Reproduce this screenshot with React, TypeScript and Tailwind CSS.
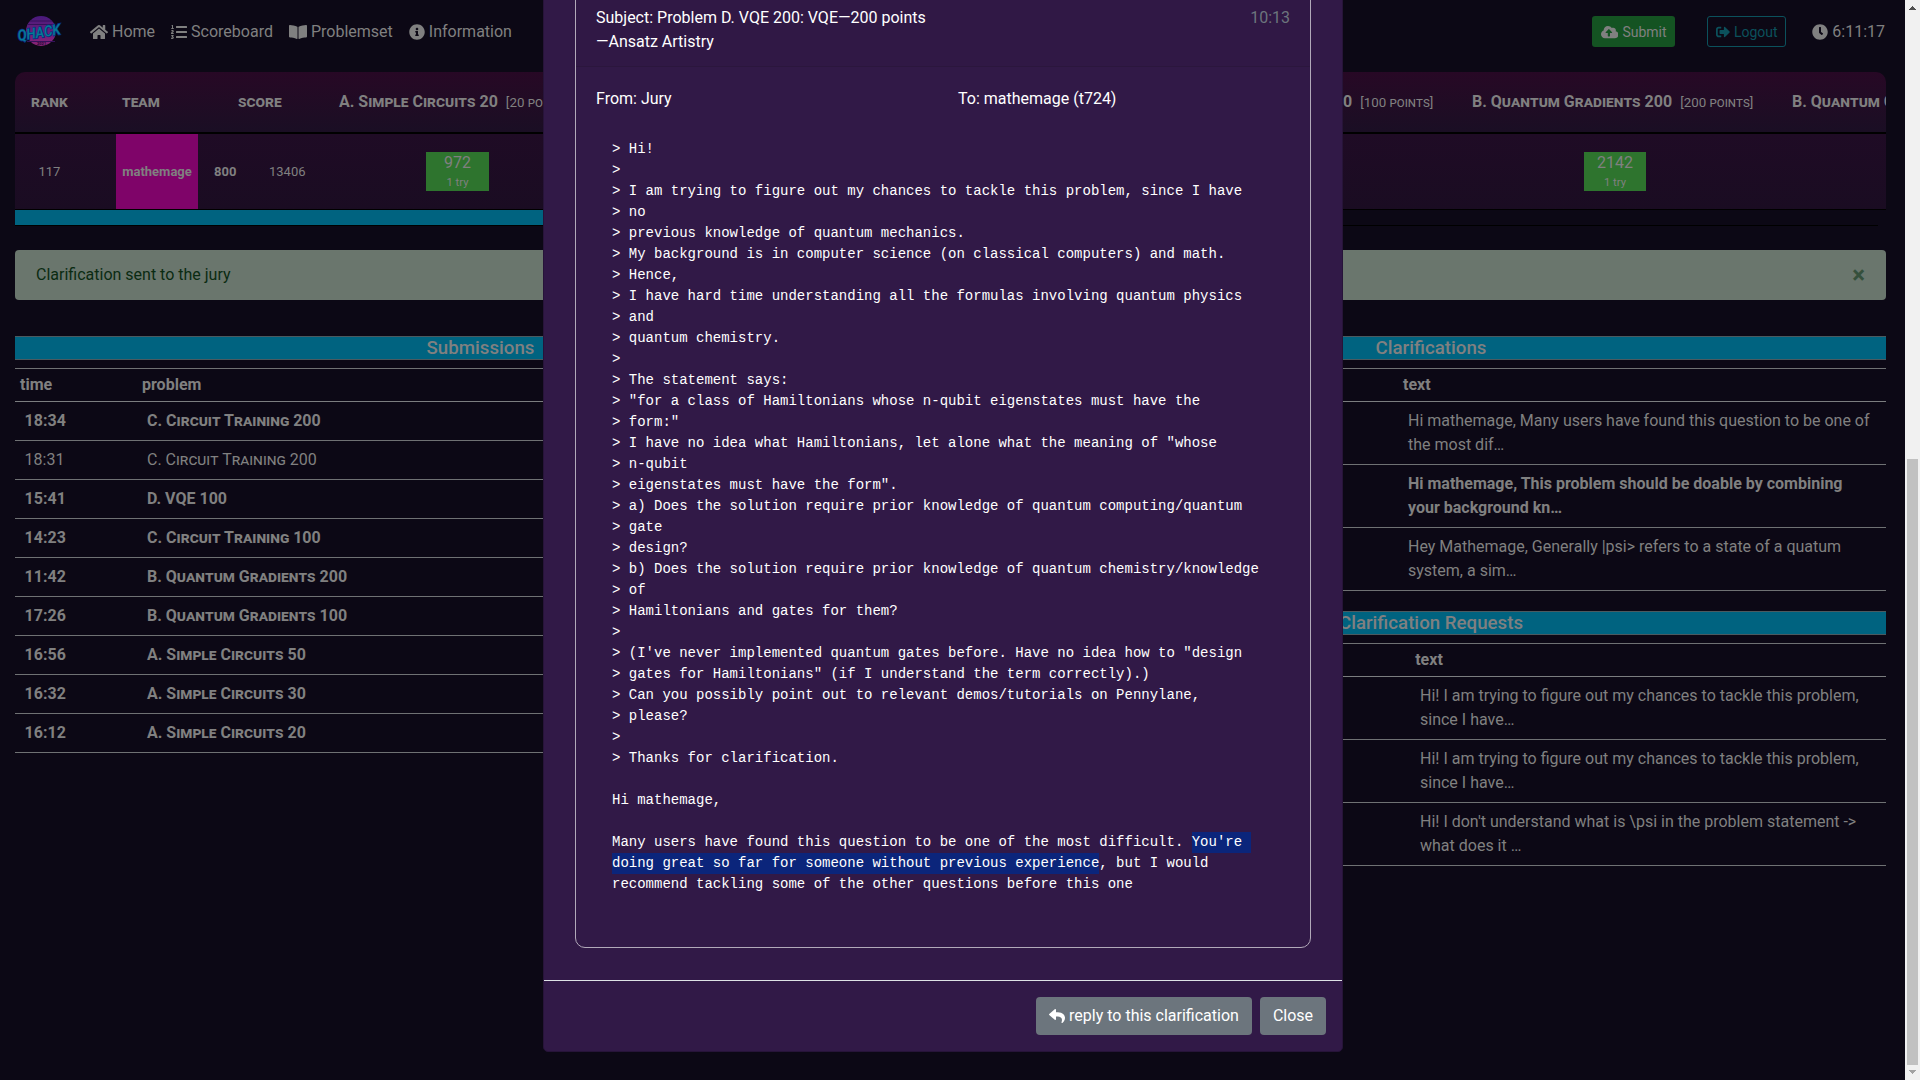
import React from "react";
import {
  FaHome,
  FaListOl,
  FaBookOpen,
  FaInfoCircle,
  FaCloudUploadAlt,
  FaSignOutAlt,
  FaClock,
  FaReply,
} from "react-icons/fa";

const submissions = [
  { time: "18:34", problem: "C. Circuit Training 200", seen: false },
  { time: "18:31", problem: "C. Circuit Training 200", seen: true },
  { time: "15:41", problem: "D. VQE 100", seen: false },
  { time: "14:23", problem: "C. Circuit Training 100", seen: false },
  { time: "11:42", problem: "B. Quantum Gradients 200", seen: false },
  { time: "17:26", problem: "B. Quantum Gradients 100", seen: false },
  { time: "16:56", problem: "A. Simple Circuits 50", seen: false },
  { time: "16:32", problem: "A. Simple Circuits 30", seen: false },
  { time: "16:12", problem: "A. Simple Circuits 20", seen: false },
];

const clarifications = [
  { lines: ["Hi mathemage, Many users have found this question to be one of", "the most dif…"], unread: false },
  { lines: ["Hi mathemage, This problem should be doable by combining", "your background kn…"], unread: true },
  { lines: ["Hey Mathemage, Generally |psi> refers to a state of a quatum", "system, a sim…"], unread: false },
];

const requests = [
  { lines: ["Hi! I am trying to figure out my chances to tackle this problem,", "since I have…"], unread: false },
  { lines: ["Hi! I am trying to figure out my chances to tackle this problem,", "since I have…"], unread: false },
  { lines: ["Hi! I don't understand what is \\psi in the problem statement ->", "what does it …"], unread: false },
];

const quoted = `> Hi!
>
> I am trying to figure out my chances to tackle this problem, since I have
> no
> previous knowledge of quantum mechanics.
> My background is in computer science (on classical computers) and math.
> Hence,
> I have hard time understanding all the formulas involving quantum physics
> and
> quantum chemistry.
>
> The statement says:
> "for a class of Hamiltonians whose n-qubit eigenstates must have the
> form:"
> I have no idea what Hamiltonians, let alone what the meaning of "whose
> n-qubit
> eigenstates must have the form".
> a) Does the solution require prior knowledge of quantum computing/quantum
> gate
> design?
> b) Does the solution require prior knowledge of quantum chemistry/knowledge
> of
> Hamiltonians and gates for them?
>
> (I've never implemented quantum gates before. Have no idea how to "design
> gates for Hamiltonians" (if I understand the term correctly).)
> Can you possibly point out to relevant demos/tutorials on Pennylane,
> please?
>
> Thanks for clarification.

Hi mathemage,

Many users have found this question to be one of the most difficult. `;

function Logo() {
  return (
    <svg viewBox="0 0 48 32" className="h-8 w-12 overflow-visible">
      <defs>
        <linearGradient id="sun" x1="0" y1="0" x2="0" y2="1">
          <stop offset="0" stopColor="#48197c" />
          <stop offset="1" stopColor="#8a2478" />
        </linearGradient>
      </defs>
      <circle cx="24" cy="15" r="15" fill="url(#sun)" />
      <path d="M13 5h22M10.500 8.500h27M10 25.500h28" stroke="#35125a" strokeWidth="1" />
      <g transform="translate(1.500 25) rotate(-9)">
        <text
          x="0"
          y="0"
          textLength="43"
          lengthAdjust="spacingAndGlyphs"
          className="font-['Roboto'] text-[15px] font-medium italic"
          fill="#067a94"
          stroke="#0a2a80"
          strokeWidth="1.6"
          paintOrder="stroke"
        >
          QHACK
        </text>
      </g>
      <text x="20" y="29" className="font-['Roboto'] text-[4px] font-bold" fill="#1c0830">
        2021
      </text>
    </svg>
  );
}

function Navbar() {
  return (
    <nav className="flex h-[62px] items-center pl-[17px] pr-[20px] pt-px">
      <Logo />
      <div className="ml-[25px] flex items-center gap-4">
        <span className="flex items-center gap-1"><FaHome className="h-4 w-[18px]" />Home</span>
        <span className="flex items-center gap-1"><FaListOl className="size-4" />Scoreboard</span>
        <span className="flex items-center gap-1"><FaBookOpen className="h-4 w-[18px]" />Problemset</span>
        <span className="flex items-center gap-1"><FaInfoCircle className="size-4" />Information</span>
      </div>
      <button className="ml-auto flex h-[31px] w-[83px] items-center justify-center gap-1 rounded-[3px] bg-[#145322] text-sm">
        <FaCloudUploadAlt className="h-3.5 w-[17.5px]" />Submit
      </button>
      <button className="ml-8 flex h-[31px] w-[79px] items-center justify-center gap-1 rounded-[3px] border border-[#0b515c] text-sm text-[#0b515c]">
        <FaSignOutAlt className="size-3.5" />Logout
      </button>
      <span className="ml-[26px] flex items-center gap-1"><FaClock className="size-4" />6:11:17</span>
    </nav>
  );
}

function ProblemHead({ name, points }: { name: string; points: string }) {
  return (
    <div className="shrink-0 whitespace-nowrap text-base font-bold [font-variant:small-caps]">
      {name} <span className="ml-1 text-[13.33px] font-normal">[{points} points]</span>
    </div>
  );
}

function ScoreCell({ value, className }: { value: string; className: string }) {
  return (
    <div className={`flex h-[39px] shrink-0 flex-col items-center bg-[#2e742e] pt-px text-[#808080] ${className}`}>
      <span className="text-base leading-5">{value}</span>
      <span className="text-[11.2px] leading-5">1 try</span>
    </div>
  );
}

function Scoreboard() {
  return (
    <section className="ml-[15px] mt-[10px] w-[1871px]">
      <div className="flex h-[60px] items-center overflow-hidden rounded-t-[10px] bg-linear-to-b from-[#270825] to-[#1a0e24]">
        <div className="ml-4 w-[91px] shrink-0 text-base font-bold [font-variant:small-caps]">rank</div>
        <div className="w-[116px] shrink-0 text-base font-bold [font-variant:small-caps]">team</div>
        <div className="w-[101px] shrink-0 text-base font-bold [font-variant:small-caps]">score</div>
        <div className="w-[813px] shrink-0"><ProblemHead name="A. Simple Circuits 20" points="20" /></div>
        <div className="w-[320px] shrink-0"><ProblemHead name="B. Quantum Gradients 100" points="100" /></div>
        <div className="w-[320px] shrink-0"><ProblemHead name="B. Quantum Gradients 200" points="200" /></div>
        <ProblemHead name="B. Quantum Gradients 500" points="500" />
      </div>
      <div className="flex h-[78px] items-center border-b border-t-2 border-black bg-linear-to-b from-[#1f0b25] to-[#1a0c22] text-[13px]">
        <div className="ml-[23.5px] w-[77.5px]">117</div>
        <div className="flex h-full w-[82px] items-center justify-center bg-[#7f0469] font-bold">mathemage</div>
        <div className="ml-[16px] w-[55px] font-bold">800</div>
        <div className="w-[157px]">13406</div>
        <ScoreCell value="972" className="w-[63px]" />
        <ScoreCell value="2142" className="ml-[1095px] w-[62px]" />
      </div>
      <div className="h-4 w-[1863px] border-b border-black">
        <div className="h-[15px] w-[931px] bg-[#006380]" />
      </div>
    </section>
  );
}

function Heading({ children }: { children: React.ReactNode }) {
  return (
    <h1 className="h-6 border-y border-[#4b5a60] bg-[#006380] text-center text-[18.72px] font-medium leading-[22px]">
      {children}
    </h1>
  );
}

function MessageTable({
  rows,
  headPad,
  rowPad,
}: {
  rows: { lines: string[]; unread: boolean }[];
  headPad: string;
  rowPad: string;
}) {
  return (
    <div className="mt-2 border-t border-[#6f7173]">
      <div className={`h-[33px] border-b border-[#7b7d7f] pt-1 font-bold leading-6 ${headPad}`}>text</div>
      {rows.map((r, i) => (
        <div
          key={i}
          className={`h-[63px] border-b border-[#6f7173] pt-[7px] leading-6 ${rowPad} ${r.unread ? "font-bold" : ""}`}
        >
          {r.lines.map((l) => (
            <div key={l} className="whitespace-nowrap">{l}</div>
          ))}
        </div>
      ))}
    </div>
  );
}

function Modal() {
  return (
    <div className="absolute left-[543px] top-[-60px] flex h-[1112px] w-[800px] flex-col rounded-[5px] border border-[#271439] bg-[#311947] text-white">
      <div className="mx-[31px] h-[1007px] shrink-0 rounded-[10px] border border-[#b1a9b9]">
        <div className="flex h-[125px] items-start justify-between border-b border-[#2b163d] bg-[#301845] px-5 pt-16 leading-6">
          <div>
            Subject: Problem D. VQE 200: VQE—200 points
            <br />
            —Ansatz Artistry
          </div>
          <div className="text-[#6c757d]">10:13</div>
        </div>
        <div className="flex px-5 pt-5 leading-6">
          <div className="w-[362px]">From: Jury</div>
          <div>To: mathemage (t724)</div>
        </div>
        <pre className="ml-9 mt-7 font-['Liberation_Mono',monospace] text-sm leading-[21px]">
          {quoted}
          <span className="inline-block bg-[#0b257b]">{"You're "}</span>
          {"\n"}
          <span className="inline-block bg-[#0b257b]">doing great so far for someone without previous experience</span>
          {", but I would\nrecommend tackling some of the other questions before this one"}
        </pre>
      </div>
      <div className="mt-8 flex flex-1 items-start justify-end gap-2 border-t border-[#dee2e6] px-4 pt-4">
        <button className="flex h-[38px] w-[216px] items-center justify-center gap-1 rounded bg-[#6c757d]">
          <FaReply className="size-4" />reply to this clarification
        </button>
        <button className="h-[38px] w-[66px] rounded bg-[#6c757d]">Close</button>
      </div>
    </div>
  );
}

function Scrollbar() {
  return (
    <div className="flex h-full w-[15px] shrink-0 flex-col items-center bg-[#f1f1f1]">
      <svg viewBox="0 0 15 15" className="size-[15px]" shapeRendering="crispEdges">
        <path d="M7 6h1v1h1v1h1v1h1v1H4V9h1V8h1V7h1z" fill="#505050" />
      </svg>
      <div className="mt-[444px] h-[606px] w-[11px] bg-[#c1c1c1]" />
      <svg viewBox="0 0 15 15" className="size-[15px]" shapeRendering="crispEdges">
        <path d="M4 5h7v1h-1v1H9v1H8v1H7V8H6V7H5V6H4z" fill="#a3a3a3" />
      </svg>
    </div>
  );
}

export default function App() {
  return (
    <div className="relative flex h-[1080px] w-[1920px] overflow-hidden bg-[#0c0815] font-['Roboto',sans-serif] text-base text-[#808080]">
      <main className="w-[1905px] shrink-0">
        <Navbar />
        <Scoreboard />
        <div className="ml-[15px] mt-6 flex h-[50px] w-[1871px] items-center justify-between rounded bg-[#6a766d] pl-[21px] pr-[21px] text-[#0a2b12]">
          <span>Clarification sent to the jury</span>
          <span className="text-2xl font-bold leading-none text-[#35503c]">×</span>
        </div>
        <div className="ml-[15px] mt-9 flex w-[1871px] gap-[30px]">
          <section className="w-[931px]">
            <Heading>Submissions</Heading>
            <div className="mt-2 border-t border-[#6f7173]">
              <div className="flex h-[33px] border-b border-[#7b7d7f] pl-[5px] pt-1 font-bold leading-6">
                <div className="w-[122px]">time</div>
                <div>problem</div>
              </div>
              {submissions.map((s) => (
                <div
                  key={s.time}
                  className={`flex h-[39px] items-center border-b border-[#6f7173] pl-[9.6px] ${s.seen ? "" : "font-bold"}`}
                >
                  <div className="w-[122.4px]">{s.time}</div>
                  <div className="[font-variant:small-caps]">{s.problem}</div>
                </div>
              ))}
            </div>
          </section>
          <section className="w-[910px]">
            <Heading>Clarifications</Heading>
            <MessageTable rows={clarifications} headPad="pl-[427px]" rowPad="pl-[432px]" />
            <div className="h-5" />
            <Heading>Clarification Requests</Heading>
            <MessageTable rows={requests} headPad="pl-[439.2px]" rowPad="pl-[444px]" />
          </section>
        </div>
      </main>
      <Scrollbar />
      <Modal />
    </div>
  );
}
